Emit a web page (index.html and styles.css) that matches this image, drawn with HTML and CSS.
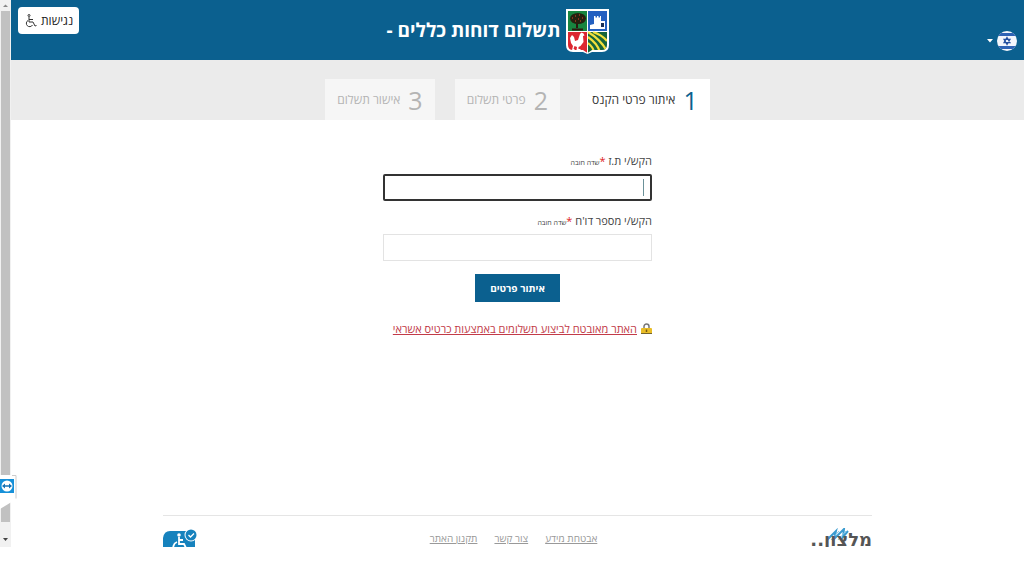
FILE: index.html
```html
<!DOCTYPE html>
<html lang="he">
<head>
<meta charset="utf-8">
<title>תשלום דוחות כללים</title>
<link rel="stylesheet" href="styles.css">
</head>
<body>
<div class="window">
  <div class="scrollbar">
    <svg class="arrow" viewBox="0 0 11 11"><path d="M3 7 5.500 4.500 8 7z" fill="#888"/></svg>
    <div class="thumb"></div>
    <svg class="arrow end" viewBox="0 0 11 11"><path d="M3 4h5L5.500 7z" fill="#444"/></svg>
    <svg class="remote" viewBox="0 0 17 36">
      <path d="M0 0h16.500v24L0 34z" fill="#fff"/>
      <path d="M12 .5h4v23" fill="none" stroke="#ccc"/>
      <rect y="4" width="14" height="14" fill="#1690d8"/>
      <circle cx="7" cy="11" r="5.500" fill="#fff"/>
      <path d="M2 11 5 8.500v1.700h4V8.500l3 2.500L9 13.500v-1.700H5v1.700z" fill="#1672b5"/>
    </svg>
  </div>
  <div class="page" dir="rtl">
    <header class="top">
      <button class="lang" type="button" aria-label="שפה">
        <svg width="20" height="20" viewBox="0 0 20 20">
          <defs><clipPath id="disc"><circle cx="10" cy="10" r="10"/></clipPath></defs>
          <g clip-path="url(#disc)"><path d="M0 0h20v20H0z" fill="#f3f6fc"/><path d="M0 2h20v3H0zM0 15h20v3H0z" fill="#2f63b5"/></g>
          <path d="M10 6.500 13 11.600H7zM10 13.500 7 8.400h6z" fill="none" stroke="#2450a0" stroke-width="1.200"/>
        </svg>
        <svg width="6" height="4" viewBox="0 0 6 4"><path d="M0 0h6L3 3.500z" fill="#fff"/></svg>
      </button>
      <div class="brand">
        <svg width="43" height="45" viewBox="0 0 43 45">
          <defs><clipPath id="shield"><path d="M2 2h39v34q0 5-5 5H26l-4.500 3-4.500-3H7q-5 0-5-5z"/></clipPath></defs>
          <path d="M0 0h43v36q0 7-7 7H26l-4.500 2L17 43H7q-7 0-7-7z" fill="#fff"/>
          <g clip-path="url(#shield)">
            <path d="M2 2h19v20H2z" fill="#188540"/><path d="M22 2h19v20H22z" fill="#2460c0"/>
            <path d="M2 23h19v22H2z" fill="#dc2630"/><path d="M22 23h19v22H22z" fill="#17643a"/>
            <path d="M11 13v6M6 20.500h11" stroke="#2b1a10" stroke-width="2"/>
            <ellipse cx="12" cy="9.500" rx="8" ry="5.500" fill="#25210f"/>
            <path d="M6 9h1M9 7h1M13 6h1M16 9h1M12 10h1M9 12h1M14 12h1" stroke="#a63b22" stroke-width="1.500"/>
            <path d="M24 20v-4l4-1V7h1.500v1.500H31V7h1.500v1.500H34V7h1v5h4v8z" fill="#fff"/>
            <path d="M35 14h3v4h-3z" fill="#1b2f55"/>
            <path d="M22 23q12 7 19 19M22 28q9 6 12 15M22 34q5 4 6 9M27 23q9 3 14 9" fill="none" stroke="#f1df3c" stroke-width="2.200"/>
            <path d="M14 25l1.500-1.500 2 1 1 2-1.500.5.5 6-3 4-2 1v2h2v1h-4l.5-3-2.500-1-1 3h1v1H6l1-4-2-3-1-5 2-3 2 2 1 4 3-1z" fill="#fff"/>
          </g>
          <path d="M2 22.500h39M21.500 2v41" stroke="#fff" stroke-width=".5"/>
        </svg>
        <h1>תשלום דוחות כללים -</h1>
      </div>
      <button class="access" type="button">
        <span>נגישות</span>
        <svg width="13" height="14" viewBox="0 0 13 14" fill="none" stroke="#333"><circle cx="5" cy="1.500" r="1"/><path d="M5 3v5h4l2 4 1.500-.5M5 5.500h4M4 6.500a3.300 3.300 0 1 0 4.500 4.500"/></svg>
      </button>
    </header>
    <nav>
      <ol class="steps">
        <li class="step active"><b>1</b><span>איתור פרטי הקנס</span></li>
        <li class="step"><b>2</b><span>פרטי תשלום</span></li>
        <li class="step"><b>3</b><span>אישור תשלום</span></li>
      </ol>
    </nav>
    <main>
      <form class="form">
        <label for="idnum">הקש/י ת.ז <i>*</i><small>שדה חובה</small></label>
        <div class="field current"><input id="idnum" type="text"></div>
        <label for="report">הקש/י מספר דו'ח <i>*</i><small>שדה חובה</small></label>
        <div class="field"><input id="report" type="text"></div>
        <button class="submit" type="button">איתור פרטים</button>
        <div class="secure">
          <svg width="11" height="12" viewBox="0 0 11 12"><path d="M3 6V3.500a2.500 2.500 0 0 1 5 0V6" fill="none" stroke="#777" stroke-width="1.500"/><rect y="5" width="11" height="6" rx="1" fill="#e9bd27"/><path d="M0 10.500h11" stroke="#75642a"/><path d="M5.500 6.500v2.500" stroke="#765710" stroke-width="1.500"/></svg>
          <a href="#">האתר מאובטח לביצוע תשלומים באמצעות כרטיס אשראי</a>
        </div>
      </form>
    </main>
    <footer class="footer">
      <div class="vendor">
        <svg width="24" height="13" viewBox="0 0 24 13" fill="none" stroke="#3a9bd0" stroke-width="2"><path d="M1 12 10 3 8 11 18 1l-1 8 5-6"/><path d="M5 12l8-9M12 12l8-9" stroke="#8bc9e8" stroke-width="1"/></svg>
        <span>מלצון..</span>
      </div>
      <div class="links"><a href="#">אבטחת מידע</a><a href="#">צור קשר</a><a href="#">תקנון האתר</a></div>
      <svg class="badge" width="34" height="24" viewBox="0 0 34 24">
        <path d="M7 2h19l6 8v10H0V9q1-7 7-7z" fill="#1682bd"/>
        <circle cx="28" cy="6" r="6.500" fill="#fff"/><circle cx="28" cy="6" r="5.500" fill="#1682bd"/>
        <path d="m25.500 6 2 2 3.500-3.500" fill="none" stroke="#fff" stroke-width="1.300"/>
        <circle cx="16" cy="6" r="1.800" fill="#fff"/>
        <path d="M16 8v7h5l3 6M16 11h4M14 13a5.500 5.500 0 1 0 7 7" fill="none" stroke="#fff" stroke-width="1.800"/>
      </svg>
    </footer>
  </div>
</div>
</body>
</html>
```
FILE: styles.css
```css
* { box-sizing: border-box; }
body { margin: 0; background: #fff; font-family: "Open Sans", "Noto Sans", "DejaVu Sans", sans-serif; color: #444; }
button { font-family: inherit; border: 0; cursor: pointer; }
.window { display: flex; height: 95vh; }
.scrollbar { position: relative; flex: 0 0 11px; display: flex; flex-direction: column; background: #f1f1f1; }
.arrow { width: 11px; height: 11px; }
.arrow.end { margin: 12px 0 2px; }
.thumb { flex: 1; margin: 0 1px; background: #c1c1c1; }
.remote { position: absolute; left: 0; bottom: 36px; width: 17px; height: 36px; }
.page { flex: 1; min-width: 0; display: flex; flex-direction: column; }

.top { display: grid; grid-template-columns: 1fr auto 1fr; align-items: start; height: 60px; padding: 7px 7px 0; background: #0b608f; }
.lang { display: flex; align-items: center; gap: 4px; justify-self: start; margin-top: 24px; padding: 0; background: none; }
.brand { display: flex; align-items: center; gap: 5px; padding-top: 2px; margin-right: 40px; }
.brand h1 { margin: 0; padding-bottom: 4px; font-size: 19px; line-height: 40px; font-weight: 700; color: #fff; white-space: nowrap; }
.access { display: flex; align-items: center; justify-self: end; gap: 4px; height: 27px; padding: 0 6px; border-radius: 4px; background: #fff; color: #222; font-size: 12px; }

.steps { display: flex; justify-content: center; gap: 20px; margin: 0; padding: 19px 0 0; list-style: none; background: #ebebeb; }
.step { display: flex; align-items: center; gap: 8px; height: 41px; padding: 0 12px; background: #f6f6f6; color: #b4b4b4; font-size: 12px; white-space: nowrap; }
.step b { font-size: 25px; font-weight: 400; }
.step.active { background: #fff; color: #333; }
.step.active b { color: #0b608f; }

main { flex: 1; }
.form { display: flex; flex-direction: column; width: 269px; margin: 0 auto; padding-top: 31px; }
.form label { font-size: 11px; line-height: 20px; }
.form i { color: #d22; font-style: normal; }
.form small { font-size: 7px; }
.field { position: relative; margin: 1px 0 10px; }
.field input { display: block; width: 100%; height: 27px; padding: 0 8px; border: 1px solid #e3e3e3; background: #fff; outline: 0; font: inherit; font-size: 12px; }
.field.current input { border: 2px solid #333; border-radius: 2px; }
.field.current::after { content: ""; position: absolute; top: 5px; right: 8px; width: 1px; height: 17px; background: #6b9199; }
.submit { align-self: center; margin-top: 3px; height: 28px; padding: 0 15px; background: #0b608f; color: #fff; font-size: 10px; font-weight: 700; }
.secure { display: flex; align-items: center; gap: 4px; margin-top: 17px; font-size: 11px; line-height: 20px; white-space: nowrap; }
.secure a { color: #c23b48; }

.footer { display: grid; grid-template-columns: 1fr auto 1fr; align-items: start; width: 70%; height: 32px; margin: 0 auto; overflow: hidden; border-top: 1px solid #e5e5e5; }
.vendor { display: flex; flex-direction: column; align-items: flex-start; padding-top: 12px; color: #555; font-family: "DejaVu Sans", sans-serif; font-size: 18px; line-height: 18px; font-weight: 700; }
.vendor svg { margin: 0 22px -10px 0; }
.links { display: flex; gap: 17px; margin-right: 8px; padding-top: 12px; font-size: 10px; line-height: 20px; }
.links a { color: #999; }
.badge { justify-self: end; margin-top: 13px; }
```
